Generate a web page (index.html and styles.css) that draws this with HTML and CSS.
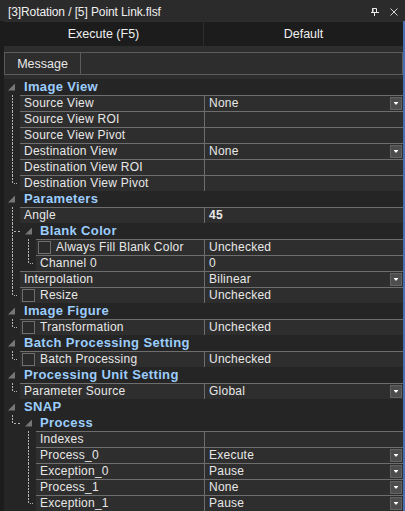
FILE: index.html
```html
<!DOCTYPE html>
<html>
<head>
<meta charset="utf-8">
<link rel="stylesheet" href="styles.css">
</head>
<body>
<div class="title">
  <span class="title-text">[3]Rotation / [5] Point Link.flsf</span>
  <span class="title-icons">
    <svg class="pin" width="8" height="8" viewBox="0 0 8 8"><path d="M1.5 0.5h4v4h-4z" fill="none" stroke="#e8e8e8"/><path d="M2 0v4" stroke="#e8e8e8"/><path d="M0 4.5h8M3.5 4.5V8" stroke="#e8e8e8"/></svg>
    <svg class="close" width="8" height="8" viewBox="0 0 8 8"><path d="M0.5 0.5l7 7M7.5 0.5l-7 7" stroke="#d4d4d4" stroke-width="1"/></svg>
  </span>
</div>
<div class="frame">
  <div class="panel">
    <div class="buttons">
      <div class="btn">Execute (F5)</div>
      <div class="btn">Default</div>
    </div>
    <div class="message">
      <div class="msg-btn">Message</div>
      <div class="msg-field"></div>
    </div>
    <div class="grid">
      <div class="cat"><span class="exp"><i class="tri"></i></span><span class="cat-label">Image View</span></div>
      <div class="row"><span class="g pass"></span><div class="name">Source View</div><div class="value">None<span class="dd"><i class="caret"></i></span></div></div>
      <div class="row"><span class="g pass"></span><div class="name">Source View ROI</div><div class="value"></div></div>
      <div class="row"><span class="g pass"></span><div class="name">Source View Pivot</div><div class="value"></div></div>
      <div class="row"><span class="g pass"></span><div class="name">Destination View</div><div class="value">None<span class="dd"><i class="caret"></i></span></div></div>
      <div class="row"><span class="g pass"></span><div class="name">Destination View ROI</div><div class="value"></div></div>
      <div class="row"><span class="g last"></span><div class="name">Destination View Pivot</div><div class="value"></div></div>

      <div class="cat"><span class="exp"><i class="tri"></i></span><span class="cat-label">Parameters</span></div>
      <div class="row"><span class="g pass"></span><div class="name">Angle</div><div class="value bold">45</div></div>
      <div class="cat"><span class="g tee"></span><span class="exp sub"><i class="tri"></i></span><span class="cat-label">Blank Color</span></div>
      <div class="row"><span class="g pass"></span><span class="g pass"></span><div class="name"><span class="cb"></span>Always Fill Blank Color</div><div class="value">Unchecked</div></div>
      <div class="row"><span class="g pass"></span><span class="g last"></span><div class="name">Channel 0</div><div class="value">0</div></div>
      <div class="row"><span class="g pass"></span><div class="name">Interpolation</div><div class="value">Bilinear<span class="dd"><i class="caret"></i></span></div></div>
      <div class="row"><span class="g last"></span><div class="name"><span class="cb"></span>Resize</div><div class="value">Unchecked</div></div>

      <div class="cat"><span class="exp"><i class="tri"></i></span><span class="cat-label">Image Figure</span></div>
      <div class="row"><span class="g last"></span><div class="name"><span class="cb"></span>Transformation</div><div class="value">Unchecked</div></div>

      <div class="cat"><span class="exp"><i class="tri"></i></span><span class="cat-label">Batch Processing Setting</span></div>
      <div class="row"><span class="g last"></span><div class="name"><span class="cb"></span>Batch Processing</div><div class="value">Unchecked</div></div>

      <div class="cat"><span class="exp"><i class="tri"></i></span><span class="cat-label">Processing Unit Setting</span></div>
      <div class="row"><span class="g last"></span><div class="name">Parameter Source</div><div class="value">Global<span class="dd"><i class="caret"></i></span></div></div>

      <div class="cat"><span class="exp"><i class="tri"></i></span><span class="cat-label">SNAP</span></div>
      <div class="cat"><span class="g corner"></span><span class="exp sub"><i class="tri"></i></span><span class="cat-label">Process</span></div>
      <div class="row"><span class="g"></span><span class="g pass"></span><div class="name">Indexes</div><div class="value"></div></div>
      <div class="row"><span class="g"></span><span class="g pass"></span><div class="name">Process_0</div><div class="value">Execute<span class="dd"><i class="caret"></i></span></div></div>
      <div class="row"><span class="g"></span><span class="g pass"></span><div class="name">Exception_0</div><div class="value">Pause<span class="dd"><i class="caret"></i></span></div></div>
      <div class="row"><span class="g"></span><span class="g pass"></span><div class="name">Process_1</div><div class="value">None<span class="dd"><i class="caret"></i></span></div></div>
      <div class="row"><span class="g"></span><span class="g last"></span><div class="name">Exception_1</div><div class="value">Pause<span class="dd"><i class="caret"></i></span></div></div>
    </div>
  </div>
</div>
</body>
</html>
```
FILE: styles.css
```css
* { box-sizing: border-box; }
html, body { margin: 0; padding: 0; }
body {
  width: 405px;
  height: 511px;
  overflow: hidden;
  background: #1c1c1c;
  font-family: "Liberation Sans", Arial, sans-serif;
  font-size: 12px;
  color: #e6e6e6;
}
.title {
  height: 21px;
  background: #2b2b2b;
  display: flex;
  align-items: center;
  justify-content: space-between;
  padding: 2px 7px 0 8px;
  font-size: 12px;
  color: #f0f0f0;
  letter-spacing: -0.1px;
}
.title-icons { display: flex; align-items: center; gap: 11px; }
.pin, .close { display: block; }
.frame {
  display: flex;
  height: 490px;
  padding-left: 4px;
}
.panel {
  flex: 1;
  background: #2d2d2d;
  border-right: 2px solid #4a6fb0;
  display: flex;
  flex-direction: column;
  overflow: hidden;
}
.buttons {
  display: grid;
  grid-template-columns: 199px 1fr;
  gap: 1px;
  margin-top: 1px;
  height: 24px;
}
.btn {
  background: #1c1c1c;
  display: flex;
  align-items: center;
  justify-content: center;
  font-size: 12.5px;
  color: #f0f0f0;
}
.message {
  margin-top: 6px;
  height: 23px;
  border: 1px solid #5c5c5c;
  display: flex;
}
.msg-btn {
  width: 76px;
  border-right: 1px solid #5c5c5c;
  display: flex;
  align-items: center;
  justify-content: center;
  font-size: 12.5px;
  color: #e8e8e8;
}
.msg-field { flex: 1; }
.grid { margin-top: 4px; }

.cat {
  display: flex;
  height: 16px;
  background: #252525;
  align-items: flex-start;
}
.exp {
  width: 20px;
  height: 16px;
  flex: none;
  display: flex;
  align-items: center;
  padding-left: 4px;
}
.exp.sub { padding-left: 5px; }
.tri {
  display: block;
  width: 7px;
  height: 7px;
  background: #777777;
  clip-path: polygon(100% 0, 100% 100%, 0 100%);
}
.cat-label {
  font-weight: bold;
  font-size: 13px;
  letter-spacing: 0.35px;
  color: #9ccdfc;
  line-height: 15px;
  white-space: nowrap;
}

.row {
  display: flex;
  height: 16px;
}
.name {
  flex: 1;
  min-width: 0;
  background: #2e2e2e;
  border-top: 1px solid #6e6e6e;
  padding-left: 4px;
  display: flex;
  align-items: center;
  line-height: 15px;
  white-space: nowrap;
  overflow: hidden;
  letter-spacing: 0.25px;
  color: #e8e8e8;
}
.value {
  width: 199px;
  flex: none;
  background: #2e2e2e;
  border-top: 1px solid #6e6e6e;
  border-left: 1px solid #6e6e6e;
  padding-left: 4px;
  display: flex;
  align-items: center;
  line-height: 15px;
  white-space: nowrap;
  letter-spacing: 0.25px;
  color: #e8e8e8;
}
.value.bold { font-weight: bold; }
.cb {
  width: 13px;
  height: 13px;
  flex: none;
  border: 1px solid #6e6e6e;
  background: #2a2a2a;
  margin-left: -2px;
  margin-right: 5px;
}
.dd {
  margin-left: auto;
  margin-right: 1px;
  width: 12px;
  height: 13px;
  flex: none;
  background: #4d4d4d;
  border: 1px solid #636363;
  display: flex;
  align-items: center;
  justify-content: center;
}
.caret {
  display: block;
  width: 5px;
  height: 3px;
  background: #ffffff;
  clip-path: polygon(0 0, 100% 0, 50% 100%);
}

.g {
  width: 16px;
  height: 16px;
  flex: none;
  background-color: #252525;
  background-repeat: no-repeat;
}
.g.pass {
  background-image: repeating-linear-gradient(to bottom, #b4b4b4 0 2px, transparent 2px 3px);
  background-size: 1px 16px;
  background-position: 8px 0;
}
.g.last {
  background-image: repeating-linear-gradient(to bottom, #b4b4b4 0 2px, transparent 2px 3px),
                    repeating-linear-gradient(to right, #b4b4b4 0 1px, transparent 1px 2px);
  background-size: 1px 9px, 4px 1px;
  background-position: 8px 0, 10px 8px;
}
.g.tee {
  background-image: repeating-linear-gradient(to bottom, #b4b4b4 0 2px, transparent 2px 3px),
                    repeating-linear-gradient(to right, #b4b4b4 0 2px, transparent 2px 4px);
  background-size: 1px 16px, 8px 1px;
  background-position: 8px 0, 10px 8px;
}
.g.corner {
  background-image: repeating-linear-gradient(to bottom, #b4b4b4 0 2px, transparent 2px 3px),
                    repeating-linear-gradient(to right, #b4b4b4 0 2px, transparent 2px 4px);
  background-size: 1px 9px, 8px 1px;
  background-position: 8px 0, 10px 8px;
}
```
